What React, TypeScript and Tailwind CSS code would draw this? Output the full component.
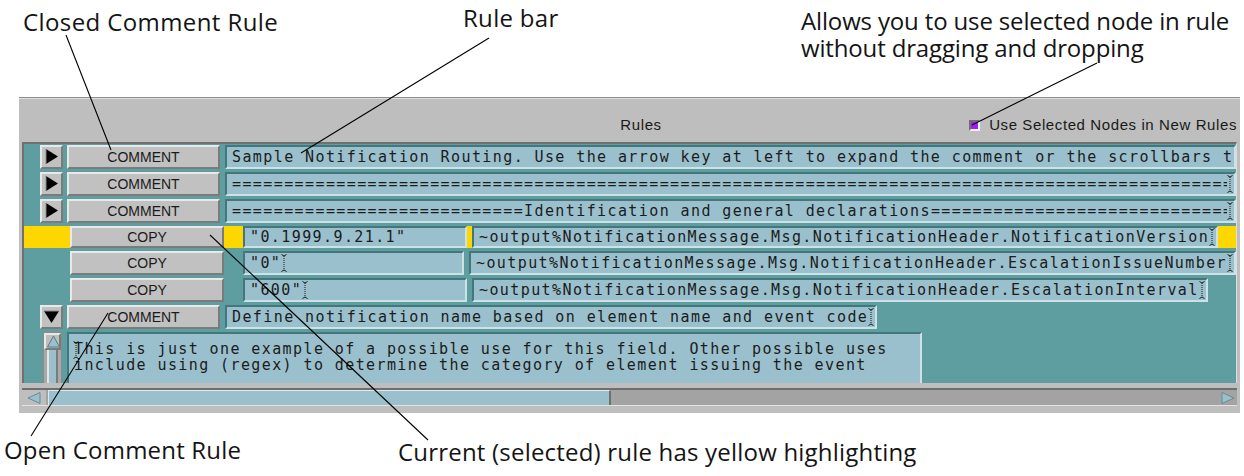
import React from 'react';

const MONO = "font-['DejaVu_Sans_Mono','Liberation_Mono',monospace] text-[15px] tracking-[1.4px] text-[#1c1c1c]";
const SANS = "font-['Liberation_Sans',Arial,sans-serif] text-[#1a1a1a]";
const NOTE = "absolute font-['Open_Sans',sans-serif] text-[24px] leading-[24px] text-[#141414] whitespace-nowrap";

// motif style bevels
const raised = 'border-2 border-t-[#e9e9e9] border-l-[#e9e9e9] border-b-[#7b7b7b] border-r-[#7b7b7b] bg-[#c1c1c1]';
const sunken = 'border-2 border-t-[#44777b] border-l-[#44777b] border-b-[#cde2e7] border-r-[#cde2e7] bg-[#9ac0cd]';

const Caret = () => (
  <svg width="6" height="18" viewBox="0 0 6 18" className="shrink-0">
    <path d="M0.5 0.5 L3 2 L5.5 0.5 M0.5 17.5 L3 16 L5.5 17.5" stroke="#1a1a1a" strokeWidth="1" fill="none" />
    <line x1="3" y1="2" x2="3" y2="16" stroke="#1a1a1a" strokeWidth="1" strokeDasharray="1 1" />
  </svg>
);

const ArrowButton = ({ down = false }: { down?: boolean }) => (
  <div className={`${raised} w-[23px] h-full shrink-0`}>
    <svg width="19" height="19" viewBox="0 0 19 19">
      {down ? (
        <>
          <polygon points="2,4 17,4 9.5,16" fill="#000" />
          <line x1="2" y1="4" x2="17" y2="4" stroke="#8a8a8a" />
        </>
      ) : (
        <>
          <polygon points="4,2 16,9.5 4,17" fill="#000" />
          <line x1="4" y1="2" x2="4" y2="17" stroke="#8a8a8a" />
        </>
      )}
    </svg>
  </div>
);

const Button = ({ label, className = '' }: { label: string; className?: string }) => (
  <div className={`${raised} ${SANS} h-full shrink-0 flex items-center justify-center text-[14px] ${className}`}>
    {label}
  </div>
);

const Field = ({
  children,
  caret = true,
  className = '',
}: {
  children: React.ReactNode;
  caret?: boolean;
  className?: string;
}) => (
  <div className={`${sunken} h-full flex items-center pl-[5px] pr-[1px] overflow-hidden ${className}`}>
    <span className={`${MONO} whitespace-pre overflow-hidden min-w-0`}>{children}</span>
    {caret && <Caret />}
  </div>
);

const eq = (n: number) => '='.repeat(n);

export default function App() {
  return (
    <div className="relative w-[1244px] h-[476px] bg-white overflow-hidden pt-[97px] pl-[19px]">
      {/* annotations */}
      <div className={`${NOTE} left-[23px] top-[10px] tracking-[0.4px]`}>Closed Comment Rule</div>
      <div className={`${NOTE} left-[463px] top-[6px] tracking-[0.3px]`}>Rule bar</div>
      <div className={`${NOTE} left-[801px] top-[7px] leading-[27px] tracking-[-0.15px]`}>
        Allows you to use selected node in rule
        <br />
        without dragging and dropping
      </div>
      <div className={`${NOTE} left-[4px] top-[438px] tracking-[0.2px]`}>Open Comment Rule</div>
      <div className={`${NOTE} left-[398px] top-[440px] tracking-[0.2px]`}>Current (selected) rule has yellow highlighting</div>

      {/* rules panel */}
      <div className="w-[1221px] h-[316px] flex flex-col bg-[#bebebe] border-t border-[#8d8d8d]">
        <div className="h-[44px] flex items-center pt-[10px] shadow-[inset_0_1px_0_#dedede]">
          <div className="flex-1" />
          <span className={`${SANS} ml-[26px] text-[15px] tracking-[0.6px]`}>Rules</span>
          <div className="flex-1 flex justify-end items-center gap-[9px] pr-[3px]">
            <div className="w-[11px] h-[11px] border-2 border-t-[#6f6f6f] border-l-[#6f6f6f] border-b-[#f2f2f2] border-r-[#f2f2f2] bg-[#a020f0]" />
            <span className={`${SANS} text-[15px] tracking-[0.6px]`}>Use Selected Nodes in New Rules</span>
          </div>
        </div>

        <div className="mx-[3px] h-[241px] overflow-hidden bg-[#5f9ea0] border-t-2 border-l-2 border-t-[#707070] border-l-[#707070] border-r border-r-[#dcdcdc] pt-[1px] flex flex-col gap-[3px]">
          <div className="h-[24px] flex pl-[16px]">
            <ArrowButton />
            <Button label="COMMENT" className="ml-[4px] w-[153px]" />
            <Field caret={false} className="ml-[5px] flex-1">
              Sample Notification Routing. Use the arrow key at left to expand the comment or the scrollbars to view the full text
            </Field>
          </div>
          <div className="h-[24px] flex pl-[16px]">
            <ArrowButton />
            <Button label="COMMENT" className="ml-[4px] w-[153px]" />
            <Field className="ml-[5px] flex-1">{eq(140)}</Field>
          </div>
          <div className="h-[24px] flex pl-[16px]">
            <ArrowButton />
            <Button label="COMMENT" className="ml-[4px] w-[153px]" />
            <Field className="ml-[5px] flex-1">
              {eq(28)}Identification and general declarations{eq(60)}
            </Field>
          </div>

          {/* selected rule */}
          <div className="h-[24px] flex items-center pl-[46px] bg-[#ffd700]">
            <Button label="COPY" className="w-[154px] !h-[22px]" />
            <Field caret={false} className="ml-[19px] w-[224px] !h-[22px]">"0.1999.9.21.1"</Field>
            <Field className="ml-[5px] shrink-0 !h-[22px]">~output%NotificationMessage.Msg.NotificationHeader.NotificationVersion</Field>
          </div>
          <div className="h-[24px] flex pl-[46px]">
            <Button label="COPY" className="w-[154px]" />
            <Field className="ml-[19px] w-[224px]">"0"</Field>
            <Field className="ml-[5px] shrink-0">~output%NotificationMessage.Msg.NotificationHeader.EscalationIssueNumber</Field>
          </div>
          <div className="h-[24px] flex pl-[46px]">
            <Button label="COPY" className="w-[154px]" />
            <Field className="ml-[19px] w-[224px]">"600"</Field>
            <Field className="ml-[5px] shrink-0">~output%NotificationMessage.Msg.NotificationHeader.EscalationInterval</Field>
          </div>

          <div className="h-[24px] flex pl-[16px]">
            <ArrowButton down />
            <Button label="COMMENT" className="ml-[4px] w-[153px]" />
            <Field className="ml-[5px] shrink-0">Define notification name based on element name and event code</Field>
          </div>
          <div className="h-[54px] shrink-0 flex pl-[19px]">
            <div className="w-[19px] h-full flex flex-col bg-[#a9a9a9] border border-[#8a8a8a]">
              <div className={`${raised} h-[17px] shrink-0 !bg-[#bebebe]`}>
                <svg width="15" height="13" viewBox="0 0 15 13">
                  <polygon points="7.5,1 13.5,12 1.5,12" fill="#9ac0cd" stroke="#5f7d86" strokeWidth="1" />
                </svg>
              </div>
              <div className="flex-1 mx-[3px] bg-[#9ac0cd] border-l-2 border-r-2 border-l-[#e6e6e6] border-r-[#7b7b7b]" />
            </div>
            <div className={`${sunken} relative ml-[5px] w-[855px] h-full pl-[5px] pt-[7px]`}>
              <div className="absolute left-[4px] top-[7px]">
                <Caret />
              </div>
              <div className={`${MONO} whitespace-pre leading-[16px]`}>
                {'This is just one example of a possible use for this field. Other possible uses\ninclude using (regex) to determine the category of element issuing the event'}
              </div>
            </div>
          </div>
        </div>

        {/* horizontal scrollbar */}
        <div className="mx-[3px] mt-[5px] h-[18px] flex bg-[#a3a3a3] border-t-2 border-t-[#6e6e6e] border-b border-b-[#e2e2e2]">
          <div className="w-[24px] h-full flex items-center justify-center bg-[#bebebe]">
            <svg width="14" height="12" viewBox="0 0 14 12">
              <polygon points="1,6 13,0.5 13,11.5" fill="#9ac0cd" stroke="#6a8a93" strokeWidth="1" />
            </svg>
          </div>
          <div className="ml-[2px] w-[563px] h-full bg-[#9ac0cd] border-t border-l border-t-[#dbeaee] border-l-[#dbeaee] border-r-2 border-r-[#6f6f6f]" />
          <div className="flex-1" />
          <div className="w-[18px] h-full flex items-center justify-center">
            <svg width="14" height="12" viewBox="0 0 14 12">
              <polygon points="13,6 1,0.5 1,11.5" fill="#9ac0cd" stroke="#6a8a93" strokeWidth="1" />
            </svg>
          </div>
        </div>
        <div className="flex-1" />
      </div>

      {/* leader lines */}
      <svg className="absolute inset-0 pointer-events-none" width="1244" height="476" viewBox="0 0 1244 476">
        <g stroke="#000" strokeWidth="1.1" fill="none">
          <line x1="66" y1="35" x2="111" y2="150" />
          <line x1="489" y1="38" x2="301" y2="153" />
          <line x1="1097" y1="63" x2="972" y2="125" />
          <line x1="108" y1="313" x2="31" y2="436" />
          <line x1="210" y1="235" x2="428" y2="440" />
        </g>
      </svg>
    </div>
  );
}
